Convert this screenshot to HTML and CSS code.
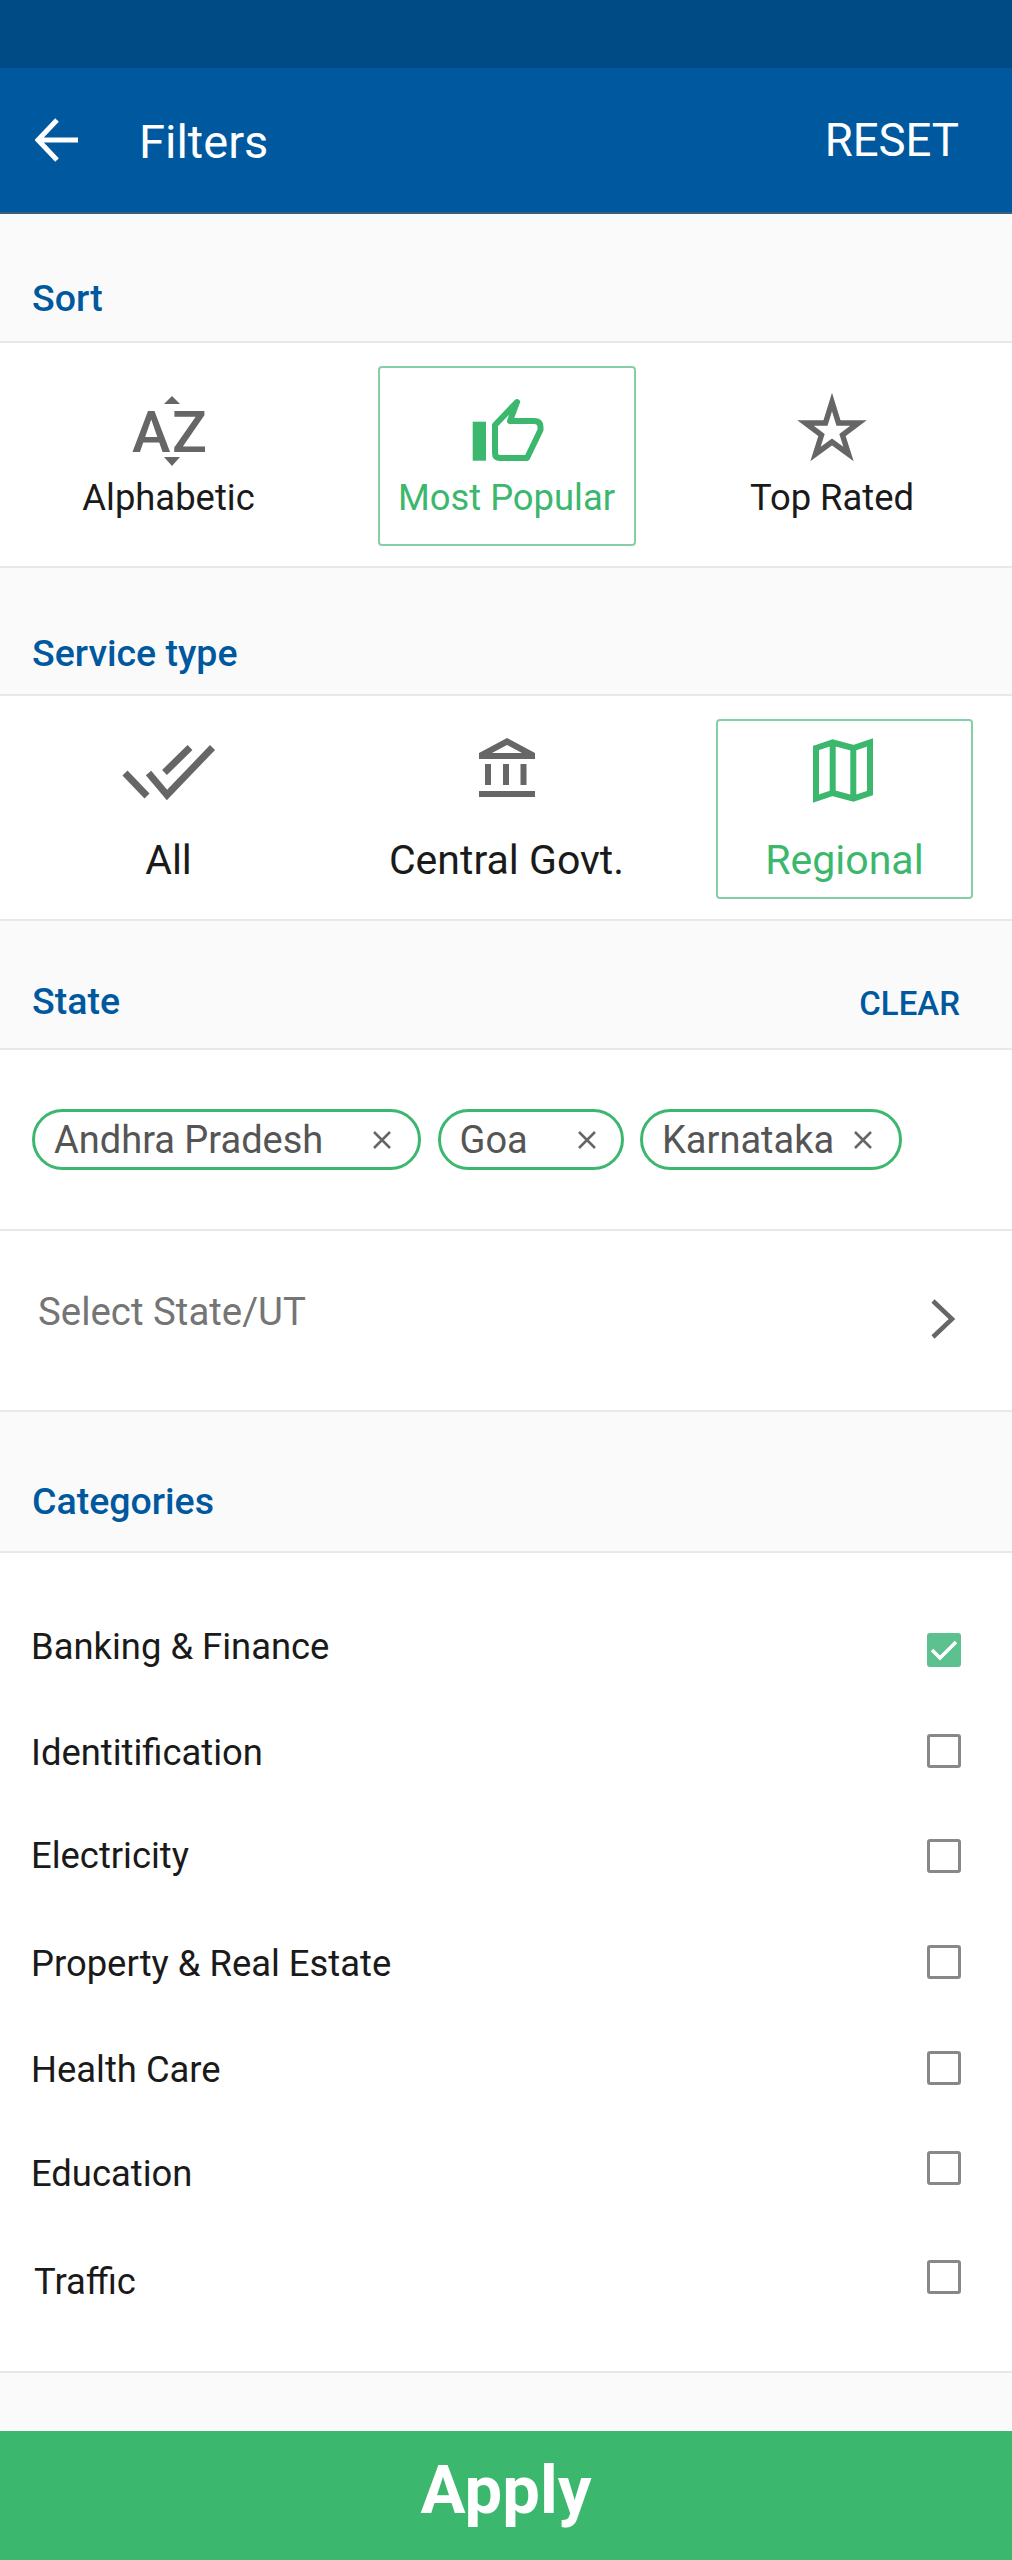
FILE: index.html
```html
<!DOCTYPE html>
<html lang="en">
<head>
    <meta charset="UTF-8">
    <meta name="viewport" content="width=device-width, initial-scale=1.0">
    <title>Filters</title>
    <link rel="stylesheet" href="styles.css">
</head>
<body>
    <div class="status-bar"></div>

    <header class="app-bar">
        <svg class="back-icon" viewBox="0 0 44 44" width="44" height="44">
            <path d="M43 22H3M22 2L3 22l19 20" fill="none" stroke="#fff" stroke-width="5"/>
        </svg>
        <h1 class="app-title">Filters</h1>
        <span class="reset">RESET</span>
    </header>

    <!-- Sort -->
    <div class="section-head head-sort"><h2 class="section-title">Sort</h2></div>
    <div class="options options-sort">
        <div class="option">
            <svg class="option-icon" viewBox="0 0 130 90" width="130" height="90">
                <path d="M68 16l8 8H60zM68 86l8-9H60z" fill="#666"/>
                <text class="az-text" x="28" y="72">A</text>
                <text class="az-text" x="68" y="72">Z</text>
            </svg>
            <span class="option-label">Alphabetic</span>
        </div>
        <div class="option active">
            <svg class="option-icon" viewBox="0 0 130 90" width="130" height="90">
                <rect x="30.7" y="41.7" width="13.3" height="39" fill="#3bb76e"/>
                <path d="M58 78H85L98.500 50V47Q98.500 41 92 41H68L75 22L53 45V73Q53 78 58 78Z" fill="none" stroke="#3bb76e" stroke-width="6" stroke-linejoin="round"/>
            </svg>
            <span class="option-label">Most Popular</span>
        </div>
        <div class="option">
            <svg class="option-icon" viewBox="0 0 130 90" width="130" height="90">
                <path d="M65 22L71.500 43H91.500L75.500 55L81.500 74L65 62L48.500 74L54.500 55L38.500 43H58.500Z" fill="none" stroke="#666" stroke-width="5.500" stroke-miterlimit="10"/>
            </svg>
            <span class="option-label">Top Rated</span>
        </div>
    </div>

    <!-- Service type -->
    <div class="section-head head-service"><h2 class="section-title">Service type</h2></div>
    <div class="options options-service">
        <div class="option">
            <svg class="option-icon" viewBox="0 0 130 90" width="130" height="90">
                <path d="M21 53L43 76M44.500 53L63 75L108.500 27.500M60.500 52.500L86 27.500" fill="none" stroke="#666" stroke-width="7"/>
            </svg>
            <span class="option-label">All</span>
        </div>
        <div class="option">
            <svg class="option-icon" viewBox="0 0 130 90" width="130" height="90">
                <path fill-rule="evenodd" d="M65 18L93 33V39H37V33ZM65 25L50 33H80Z" fill="#666"/>
                <path d="M43 44h6v21h-6zM61 44h6v21h-6zM78.500 44h6v21h-6zM37 71h56v6H37z" fill="#666"/>
            </svg>
            <span class="option-label">Central Govt.</span>
        </div>
        <div class="option active">
            <svg class="option-icon" viewBox="0 0 130 90" width="130" height="90">
                <path d="M36 28L52.700 22.500L73.300 28L90 22.500V73L73.300 78.500L52.700 73L36 78.500ZM52.700 22.500V73M73.300 28V78.500" fill="none" stroke="#3bb76e" stroke-width="6"/>
            </svg>
            <span class="option-label">Regional</span>
        </div>
    </div>

    <!-- State -->
    <div class="section-head head-state">
        <h2 class="section-title">State</h2>
        <span class="clear">CLEAR</span>
    </div>
    <div class="chips">
        <div class="chip chip-andhra">
            <span>Andhra Pradesh</span>
            <svg viewBox="0 0 20 20" width="20" height="20"><path d="M2 2L18 18M18 2L2 18" fill="none" stroke="#666" stroke-width="2.500"/></svg>
        </div>
        <div class="chip chip-goa">
            <span>Goa</span>
            <svg viewBox="0 0 20 20" width="20" height="20"><path d="M2 2L18 18M18 2L2 18" fill="none" stroke="#666" stroke-width="2.500"/></svg>
        </div>
        <div class="chip chip-karnataka">
            <span>Karnataka</span>
            <svg viewBox="0 0 20 20" width="20" height="20"><path d="M2 2L18 18M18 2L2 18" fill="none" stroke="#666" stroke-width="2.500"/></svg>
        </div>
    </div>
    <div class="select-row">
        <span>Select State/UT</span>
        <svg class="chevron" viewBox="0 0 26 40" width="26" height="40">
            <path d="M3 2L22 20L3 38" fill="none" stroke="#666" stroke-width="4.500"/>
        </svg>
    </div>

    <!-- Categories -->
    <div class="section-head head-categories"><h2 class="section-title">Categories</h2></div>
    <div class="categories">
        <div class="cat-row">
            <span>Banking &amp; Finance</span>
            <span class="checkbox checked">
                <svg viewBox="0 0 34 34" width="34" height="34"><path d="M5 17L13 25L29 9" fill="none" stroke="#fff" stroke-width="3.500"/></svg>
            </span>
        </div>
        <div class="cat-row"><span>Identitification</span><span class="checkbox"></span></div>
        <div class="cat-row"><span>Electricity</span><span class="checkbox"></span></div>
        <div class="cat-row"><span>Property &amp; Real Estate</span><span class="checkbox"></span></div>
        <div class="cat-row"><span>Health Care</span><span class="checkbox"></span></div>
        <div class="cat-row"><span>Education</span><span class="checkbox"></span></div>
        <div class="cat-row"><span class="traffic">Traffic</span><span class="checkbox"></span></div>
    </div>

    <div class="footer-gap"></div>
    <button class="apply">Apply</button>
</body>
</html>
```

FILE: styles.css
```css
:root {
    --blue: #00599f;
    --blue-dark: #004a85;
    --green: #3bb76e;
    --bg-grey: #fafafa;
    --line: #e8e8e8;
}

* {
    margin: 0;
    padding: 0;
    box-sizing: border-box;
}

body {
    font-family: Roboto, 'Liberation Sans', sans-serif;
    background-color: #ffffff;
    color: #1a1a1a;
    width: 1012px;
    height: 2560px;
    overflow: hidden;
}

.status-bar {
    height: 68px;
    background-color: var(--blue-dark);
}

.app-bar {
    height: 146px;
    background-color: var(--blue);
    border-bottom: 2px solid #3d5f7c;
    display: flex;
    align-items: center;
    padding: 0 53px 0 35px;
    color: #ffffff;
}

.back-icon {
    margin-right: 60px;
}

.app-title {
    font-size: 47px;
    font-weight: 400;
    flex: 1;
    padding-top: 2px;
}

.reset {
    font-size: 45.500px;
}

.section-head {
    background-color: var(--bg-grey);
    border-bottom: 2px solid var(--line);
    display: flex;
    align-items: flex-end;
    justify-content: space-between;
    padding-left: 32px;
    padding-right: 52px;
    line-height: 44px;
}

.head-sort {
    height: 129px;
    padding-bottom: 21px;
}

.head-service {
    height: 128px;
    padding-bottom: 19px;
}

.head-state {
    height: 129px;
    padding-bottom: 25px;
}

.head-categories {
    height: 141px;
    padding-bottom: 28px;
}

.section-title {
    font-size: 37.500px;
    font-weight: 500;
    color: var(--blue);
}

.clear {
    font-size: 33px;
    font-weight: 500;
    color: var(--blue);
    margin-bottom: -3px;
}

.options {
    display: grid;
    column-gap: 80.500px;
    padding: 23px 0 20px 40px;
    background-color: #ffffff;
    border-bottom: 2px solid var(--line);
}

.options-sort {
    grid-template-columns: 257px 258px 232px;
}

.options-service {
    grid-template-columns: 257px 258px 257px;
}

.option {
    height: 180px;
    display: flex;
    flex-direction: column;
    align-items: center;
    border: 2px solid transparent;
    border-radius: 4px;
}

.option.active {
    border-color: #86cfa5;
    color: var(--green);
}

.option-icon {
    margin-top: 12px;
    margin-bottom: 6px;
    display: block;
}

.options-service .option-icon {
    margin-top: -1px;
    margin-bottom: 28px;
}

.option-label {
    font-size: 36.400px;
    line-height: 44px;
    white-space: nowrap;
}

.options-service .option-label {
    font-size: 41px;
}

.az-text {
    font-family: Roboto, 'Liberation Sans', sans-serif;
    font-size: 58px;
    font-weight: 500;
    fill: #666666;
}

.chips {
    height: 181px;
    padding: 59px 0 0 32px;
    display: flex;
    gap: 16.500px;
    border-bottom: 2px solid var(--line);
}

.chip {
    height: 61px;
    border: 3px solid var(--green);
    border-radius: 31px;
    display: flex;
    align-items: center;
    justify-content: space-between;
    font-size: 38px;
    color: #555555;
    padding: 0 26px 0 19px;
}

.chip-andhra {
    width: 389px;
}

.chip-goa {
    width: 186px;
    padding-right: 24px;
}

.chip-karnataka {
    width: 262px;
}

.select-row {
    height: 181px;
    padding: 0 56px 18px 38px;
    display: flex;
    align-items: center;
    justify-content: space-between;
    font-size: 38.400px;
    color: #757575;
    border-bottom: 2px solid var(--line);
}

.chevron {
    margin-top: 14px;
}

.categories {
    height: 820px;
    padding: 40.500px 51px 0 31px;
    border-bottom: 2px solid var(--line);
}

.cat-row {
    height: 105.800px;
    display: flex;
    align-items: center;
    justify-content: space-between;
    font-size: 36.400px;
}

/* the rows in the original are not quite evenly spaced */
.cat-row:nth-child(3) span:first-child {
    margin-bottom: 5px;
}

.cat-row:nth-child(6) span:first-child {
    margin-bottom: 4px;
}

.cat-row:nth-child(1) .checkbox {
    margin-top: 8px;
}

.cat-row:nth-child(2) .checkbox,
.cat-row:nth-child(3) .checkbox,
.cat-row:nth-child(4) .checkbox,
.cat-row:nth-child(5) .checkbox {
    margin-bottom: 3px;
}

.cat-row:nth-child(6) .checkbox {
    margin-bottom: 14px;
}

.cat-row:nth-child(7) .checkbox {
    margin-bottom: 8px;
}

.traffic {
    margin-left: 3px;
}

.checkbox {
    width: 34px;
    height: 34px;
    border: 3px solid #888888;
    border-radius: 3px;
}

.checkbox.checked {
    border: none;
    background-color: #5cc08f;
}

.checked svg {
    display: block;
}

.footer-gap {
    height: 58px;
    background-color: var(--bg-grey);
}

.apply {
    display: block;
    width: 100%;
    height: 129px;
    border: none;
    padding-bottom: 12px;
    background-color: var(--green);
    color: #ffffff;
    font-family: Roboto, 'Liberation Sans', sans-serif;
    font-size: 67px;
    font-weight: 700;
}
```
